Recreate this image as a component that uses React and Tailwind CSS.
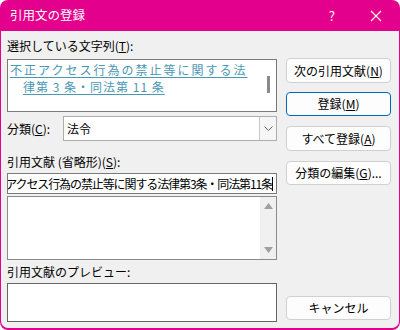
import React from "react";

const font = { fontFamily: '"Noto Sans CJK JP", "Noto Sans", sans-serif' };

function Btn({ children, primary, className = "" }) {
  return (
    <div
      className={
        "w-[105px] flex items-center justify-center rounded-[4px] text-[12px] leading-none text-black " +
        (primary ? "border border-[#0067c0] bg-[#fdfdfd] " : "border border-[#d0d0d0] bg-[#fdfdfd] ") +
        className
      }
    >
      {children}
    </div>
  );
}

export default function App() {
  return (
    <div className="w-[400px] h-[330px] bg-[#e3008c] rounded-[8px] flex flex-col" style={font}>
      <div className="h-[31px] flex items-center text-white text-[12.5px] pl-[10px] pr-[16px]">
        <span className="flex-1">引用文の登録</span>
        <span className="text-[13px] mr-[35px]">?</span>
        <svg width="12" height="12" viewBox="0 0 12 12" className="mr-[2px]">
          <path d="M1 1L11 11M11 1L1 11" stroke="white" strokeWidth="1.1" />
        </svg>
      </div>

      <div className="flex-1 mx-[1px] mb-[2px] bg-[#f0f0f0] rounded-b-[7px] flex pl-[6px]">
        {/* left column */}
        <div className="w-[270px] flex flex-col pt-[7px] text-[12px] text-black">
          <div className="h-[16px] leading-[16px]">
            選択している文字列(<span className="underline">T</span>):
          </div>
          <div className="mt-[5px] h-[53px] border border-[#7a7a7a] bg-white flex">
            <div className="flex-1 pl-[2px] pt-[1px] text-[12px] leading-[17px] text-[#4a97b4] underline underline-offset-[2px]">
              <div className="tracking-[2px]">不正アクセス行為の禁止等に関する法</div>
              <div className="pl-[13px] tracking-[1px]">律第 3 条・同法第 11 条</div>
            </div>
            <div className="w-[16px] flex justify-center pt-[16px]">
              <div className="w-[3px] h-[17px] bg-[#8a8a8a]"></div>
            </div>
          </div>

          <div className="mt-[4px] h-[25px] flex items-center">
            <div className="w-[56px]">
              分類(<span className="underline">C</span>):
            </div>
            <div className="flex-1 h-full border border-[#adadad] bg-white flex items-center pl-[3px]">
              <span className="flex-1">法令</span>
              <div className="w-[17px] h-full border-l border-[#c8c8c8] bg-[#f6f6f6] flex items-center justify-center">
                <svg width="9" height="5" viewBox="0 0 9 5">
                  <path d="M0.5 0.5L4.5 4.5L8.5 0.5" stroke="#606060" fill="none" strokeWidth="1" />
                </svg>
              </div>
            </div>
          </div>

          <div className="mt-[13px] h-[16px] leading-[16px]">
            引用文献 (省略形)(<span className="underline">S</span>):
          </div>
          <div className="mt-[3px] h-[21px] border border-[#7a7a7a] bg-white flex justify-end items-center overflow-hidden pr-[3px]">
            <span className="whitespace-nowrap tracking-[-1.1px]">
              不正アクセス行為の禁止等に関する法律第3条・同法第11条
            </span>
            <span className="w-[1px] h-[14px] bg-black shrink-0"></span>
          </div>
          <div className="mt-[2px] h-[64px] border border-[#8a8a8a] bg-white flex">
            <div className="flex-1"></div>
            <div className="w-[16px] bg-[#f0f0f0] flex flex-col items-center justify-between py-[6px]">
              <svg width="9" height="6" viewBox="0 0 9 6">
                <path d="M4.5 0L9 6H0Z" fill="#a0a0a0" />
              </svg>
              <svg width="9" height="6" viewBox="0 0 9 6">
                <path d="M0 0H9L4.5 6Z" fill="#a0a0a0" />
              </svg>
            </div>
          </div>

          <div className="mt-[4px] h-[16px] leading-[16px]">引用文献のプレビュー:</div>
          <div className="mt-[3px] h-[39px] border border-[#646464] bg-white"></div>
        </div>

        {/* right column */}
        <div className="ml-[9px] flex flex-col pt-[27px]">
          <Btn className="h-[25px]">
            次の引用文献(<span className="underline">N</span>)
          </Btn>
          <Btn primary className="h-[24px] mt-[9px]">
            登録(<span className="underline">M</span>)
          </Btn>
          <Btn className="h-[25px] mt-[10px]">
            すべて登録(<span className="underline">A</span>)
          </Btn>
          <Btn className="h-[24px] mt-[10px]">
            分類の編集(<span className="underline">G</span>)...
          </Btn>
          <Btn className="h-[24px] mt-[111px]">キャンセル</Btn>
        </div>
      </div>
    </div>
  );
}
